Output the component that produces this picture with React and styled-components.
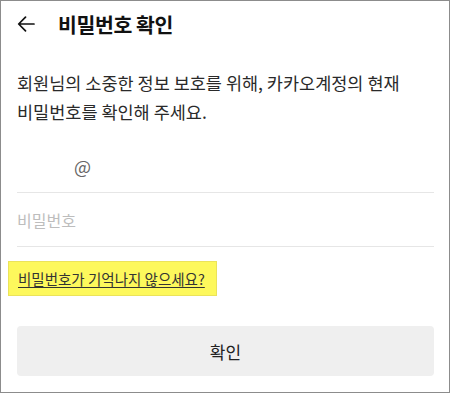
import styled, { createGlobalStyle } from "styled-components";

const GlobalStyle = createGlobalStyle`
  html, body {
    margin: 0;
    padding: 0;
    background: #ffffff;
  }
  body {
    font-family: "Noto Sans CJK KR", "Noto Sans", "Liberation Sans", sans-serif;
    color: #222222;
  }
`;

const Frame = styled.div`
  box-sizing: border-box;
  width: 450px;
  height: 393px;
  border: 1px solid #8c8c8c;
  display: flex;
  flex-direction: column;
  overflow: hidden;
`;

const Header = styled.header`
  display: flex;
  align-items: center;
  gap: 23px;
  height: 46px;
  padding: 0 16px;
`;

const BackButton = styled.button`
  display: flex;
  align-items: center;
  justify-content: center;
  width: 18px;
  height: 18px;
  padding: 0;
  border: none;
  background: none;
  color: #111111;
`;

const Title = styled.h1`
  margin: 0;
  font-size: 20.5px;
  font-weight: 700;
  letter-spacing: -0.4px;
  color: #111111;
`;

const Body = styled.main`
  display: flex;
  flex-direction: column;
  padding: 0 15px 0 16px;
`;

const Intro = styled.p`
  margin: 21px 0 13px;
  font-size: 17.5px;
  line-height: 29px;
  color: #2a2a2a;
`;

const Field = styled.div`
  display: flex;
  align-items: center;
  height: 53px;
  border-bottom: 1px solid #e6e6e6;
  padding-left: ${(p) => p.$indent || 0}px;
  font-size: ${(p) => (p.$placeholder ? 16 : 18)}px;
  color: ${(p) => (p.$placeholder ? "#bdbdbd" : "#666666")};
`;

const HelpRow = styled.div`
  display: flex;
  margin: 14px 0 30px -9px;
`;

const Highlight = styled.a`
  display: block;
  padding: 7px 11px 7px 9px;
  background: #fdf85c;
  border: 1px solid #ebe35a;
  font-size: 14.5px;
  line-height: 19px;
  color: #333333;
  text-decoration: underline;
  text-underline-offset: 2px;
`;

const ConfirmButton = styled.button`
  height: 50px;
  border: none;
  border-radius: 4px;
  background: #efefef;
  font-family: inherit;
  font-size: 17px;
  color: #222222;
`;

function ArrowLeft() {
  return (
    <svg width="18" height="16" viewBox="0 0 18 16" fill="none">
      <path
        d="M17 8H2M8.5 1.2L1.7 8l6.8 6.8"
        stroke="currentColor"
        strokeWidth="1.7"
        strokeLinecap="round"
        strokeLinejoin="round"
      />
    </svg>
  );
}

export default function App() {
  return (
    <>
      <GlobalStyle />
      <Frame>
        <Header>
          <BackButton aria-label="뒤로">
            <ArrowLeft />
          </BackButton>
          <Title>비밀번호 확인</Title>
        </Header>
        <Body>
          <Intro>
            회원님의 소중한 정보 보호를 위해, 카카오계정의 현재
            <br />
            비밀번호를 확인해 주세요.
          </Intro>
          <Field $indent={57}>@</Field>
          <Field $placeholder>비밀번호</Field>
          <HelpRow>
            <Highlight>비밀번호가 기억나지 않으세요?</Highlight>
          </HelpRow>
          <ConfirmButton>확인</ConfirmButton>
        </Body>
      </Frame>
    </>
  );
}
